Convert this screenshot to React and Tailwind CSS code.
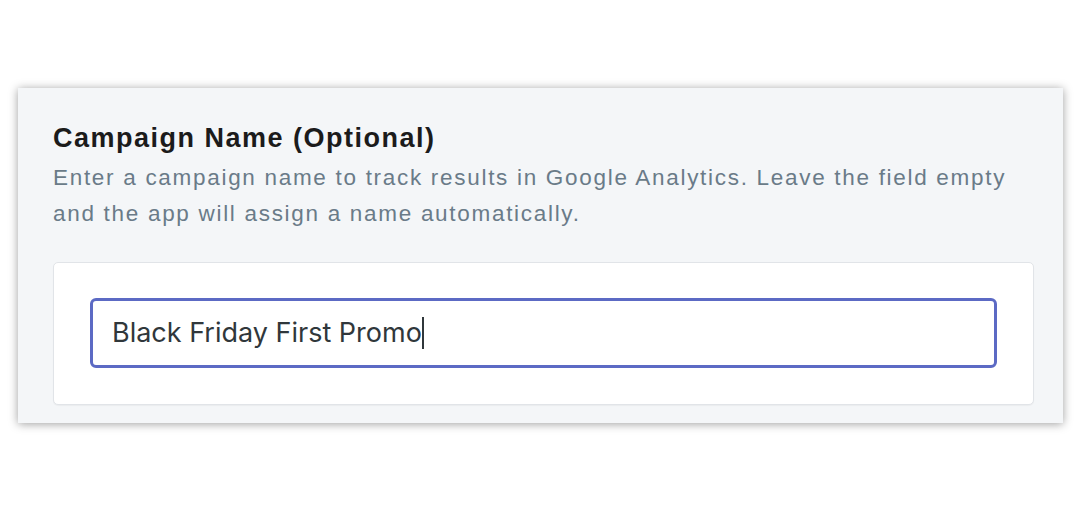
export default function App() {
  return (
    <div className="min-h-[512px] w-[1080px] bg-white pt-[88px] pl-[18px]">
      <div
        className="w-[1045px] h-[335px] bg-[#f4f6f8] pt-[35px] pl-[35px] pr-[30px] shadow-[0_1px_9px_rgba(0,0,0,0.38)]"
        style={{ fontFamily: '"Liberation Sans", Arial, sans-serif' }}
      >
        <h2 className="text-[27px] leading-[30px] font-bold tracking-[1.5px] text-[#1b1b1b]">
          Campaign Name (Optional)
        </h2>
        <p className="mt-[7px] text-[22.5px] leading-[36px] tracking-[1.7px] text-[#6a7b88]">
          Enter a campaign name to track results in Google Analytics. Leave the field empty
          <br />
          and the app will assign a name automatically.
        </p>
        <div className="mt-[30px] h-[143px] w-[981px] rounded-[5px] border border-[#e1e4e8] bg-white px-[36px] pt-[35px] shadow-[0_1px_1px_rgba(0,0,0,0.04)]">
          <div className="flex h-[70px] items-center rounded-[6px] border-[3px] border-[#5c6ac4] pl-[19px]">
            <span
              className="text-[27px] text-[#30373b]"
              style={{ fontFamily: 'Inter, "Noto Sans", sans-serif' }}
            >
              Black Friday First Promo
            </span>
            <span className="h-[32px] w-[2px] bg-[#30373b]" />
          </div>
        </div>
      </div>
    </div>
  )
}
